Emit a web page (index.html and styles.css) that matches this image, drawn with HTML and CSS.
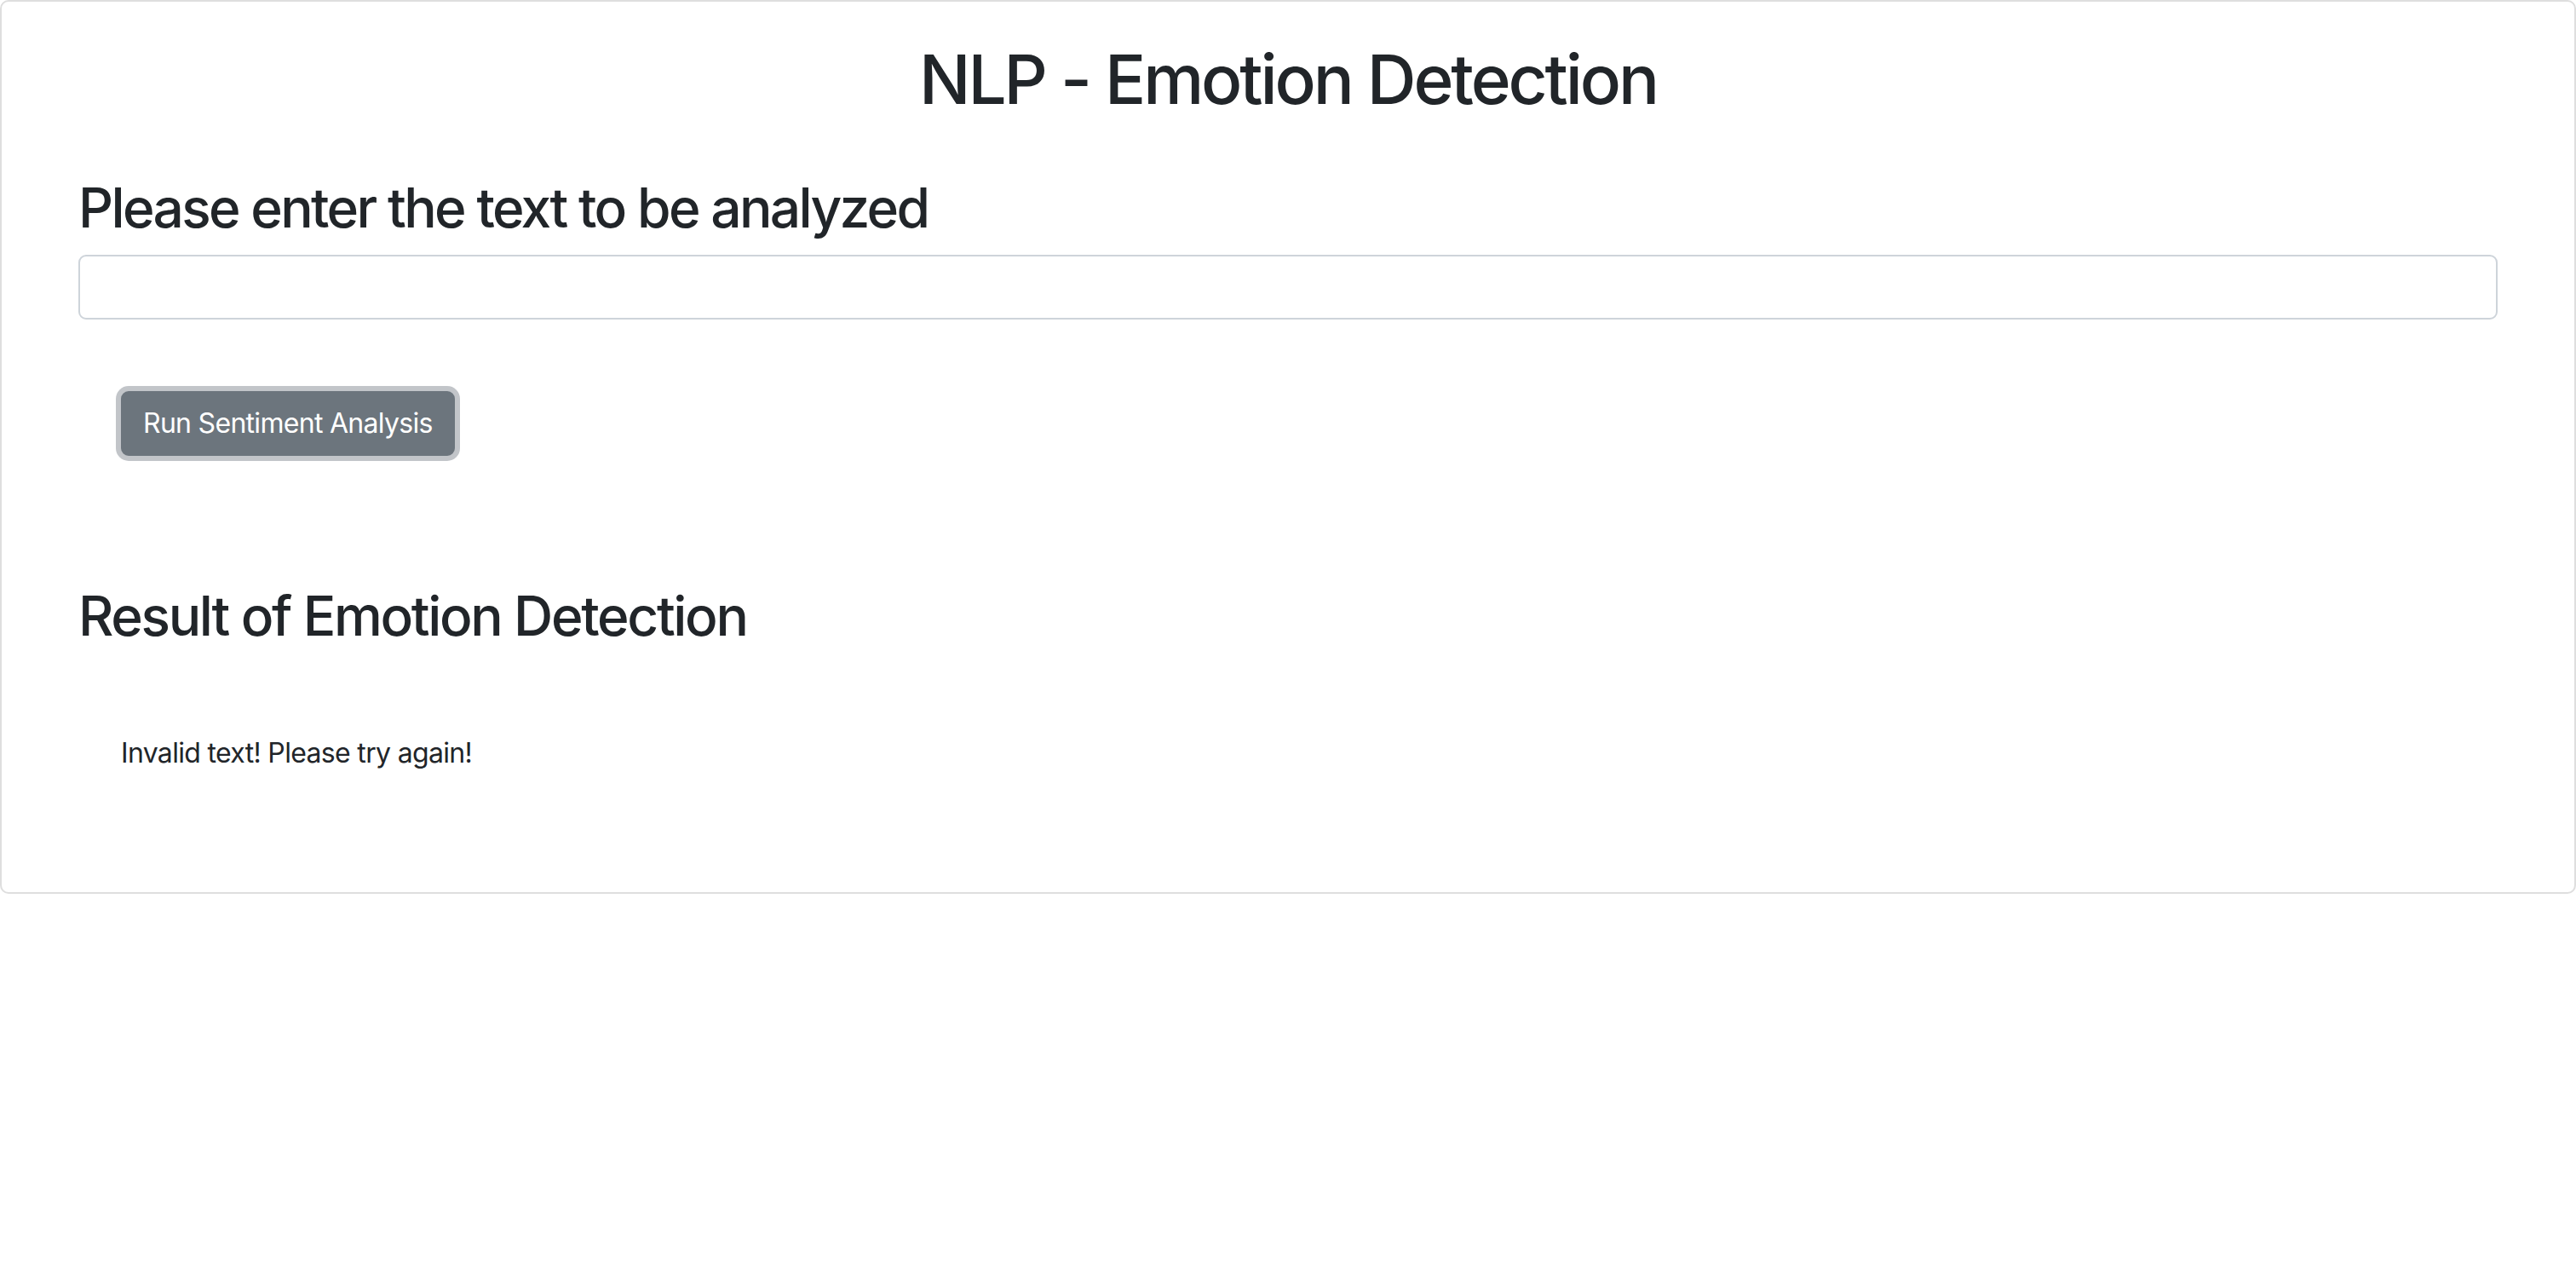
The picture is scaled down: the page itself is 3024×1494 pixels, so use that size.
FILE: index.html
```html
<!DOCTYPE html>
<html lang="en">
<head>
<meta charset="utf-8">
<title>NLP - Emotion Detection</title>
<link rel="stylesheet" href="styles.css">
</head>
<body>
<div class="card">
  <h1 class="title">NLP - Emotion Detection</h1>
  <h2 class="section-title">Please enter the text to be analyzed</h2>
  <input class="text-input" type="text">
  <div class="actions">
    <button class="btn" type="button">Run Sentiment Analysis</button>
  </div>
  <h2 class="section-title result-title">Result of Emotion Detection</h2>
  <p class="result">Invalid text! Please try again!</p>
</div>
</body>
</html>
```

FILE: styles.css
```css
html, body {
  margin: 0;
  padding: 0;
  background: #ffffff;
}

body {
  font-family: Inter, "Helvetica Neue", "Liberation Sans", sans-serif;
  color: #212529;
}

.card {
  box-sizing: border-box;
  width: 3024px;
  height: 1049px;
  border: 2px solid #dedede;
  border-radius: 10px;
  padding: 43px 90px 0 90px;
}

.title {
  margin: 0;
  font-size: 80px;
  font-weight: 500;
  line-height: 1.2;
  text-align: center;
  letter-spacing: -0.039em;
}

.section-title {
  margin: 65px 0 16px 0;
  font-size: 64px;
  font-weight: 500;
  line-height: 1.2;
  letter-spacing: -0.0415em;
}

.text-input {
  display: block;
  box-sizing: border-box;
  width: 100%;
  height: 76px;
  margin: 0;
  border: 2px solid #ced4da;
  border-radius: 9px;
  background: #fff;
  font-family: inherit;
  font-size: 32px;
  padding: 12px 24px;
  outline: none;
}

.actions {
  padding: 84px 0 0 50px;
}

.btn {
  box-sizing: border-box;
  height: 76px;
  padding: 0 24px;
  border: 2px solid #6c757d;
  border-radius: 9px;
  background: #6c757d;
  color: #ffffff;
  font-family: inherit;
  font-size: 32px;
  font-weight: 400;
  line-height: 1;
  letter-spacing: -0.022em;
  box-shadow: 0 0 0 6px #c2c5c9;
  cursor: pointer;
}

.result-title {
  margin-top: 150px;
  margin-bottom: 0;
  letter-spacing: -0.0366em;
}

.result {
  margin: 98px 0 0 50px;
  font-size: 32px;
  line-height: 1.5;
  letter-spacing: -0.021em;
}
```
